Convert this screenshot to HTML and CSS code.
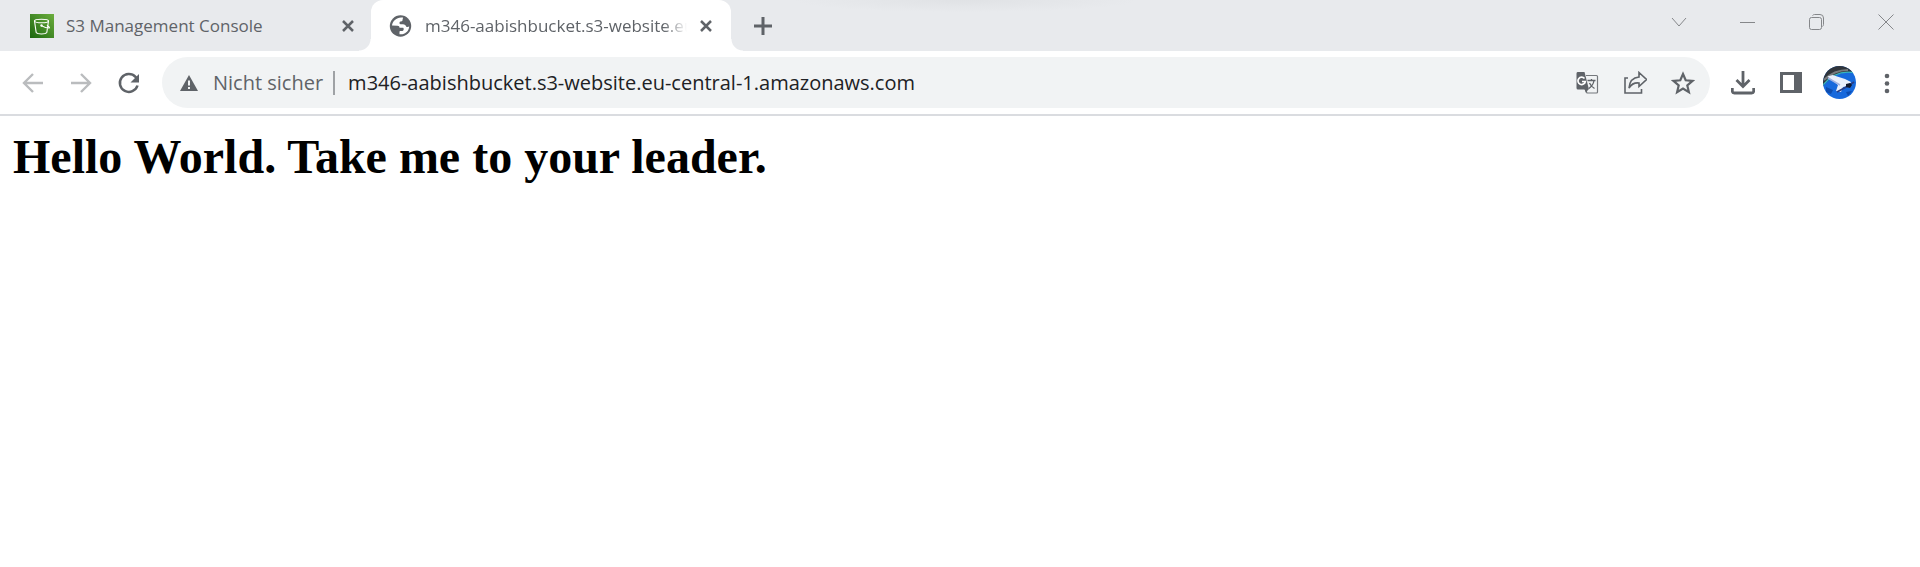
FILE: index.html
```html
<!DOCTYPE html>
<html lang="de">
<head>
<meta charset="utf-8">
<title>m346-aabishbucket.s3-website.eu-central-1.amazonaws.com</title>
<link rel="stylesheet" href="styles.css">
</head>
<body>
<header class="browser">
  <div class="tab-strip">
    <div class="tab">
      <svg class="favicon" viewBox="0 0 24 24" aria-hidden="true">
        <defs><linearGradient id="s3" x1="0" y1="1" x2="1" y2="0"><stop offset="0" stop-color="#1b660f"/><stop offset="1" stop-color="#6cae3e"/></linearGradient></defs>
        <path fill="url(#s3)" d="M0 0h24v24H0z"/>
        <g fill="none" stroke="#fff" stroke-width="1.1" stroke-linecap="round"><ellipse cx="11.500" cy="7" rx="7" ry="1.800"/><path d="M4.500 7l1.700 11.500c1.500 1.900 9.100 1.900 10.600 0L18.500 7M11.500 11.700c3 1.500 6 2.800 8 2.100-.2-1.200-1.200-1.800-2.200-2.300"/></g>
        <circle cx="11.500" cy="11.500" r="1.200" fill="#fff"/>
      </svg>
      <span class="tab-title">S3 Management Console</span>
      <button class="tab-close" aria-label="Tab schließen"><svg class="icon-cross" viewBox="0 0 14 14"><path d="M2 2l10 10M12 2L2 12"/></svg></button>
    </div>
    <div class="tab tab-active">
      <svg class="favicon" viewBox="0 0 24 24" aria-hidden="true"><circle cx="11.500" cy="12" r="10.700" fill="#5f6368"/><path fill="#fff" d="M14 3.600C8.500 2.500 3.500 6.500 3 11.500l5.500.2c1.500 0 2 .8 2 2h3.200c.8 0 1 .6 1 1.300 0 1.500-.7 2-2 2h-1.200c-.7 0-1 .4-1 1v2.200c5 .8 9.500-2.800 9.700-7.700-.8.500-1.700.5-2.700.4-.8-1.700-1.800-2.700-3.500-2.700h-2.500c-.8 0-1-.5-1-1.200C10.500 7.800 11 7.500 12 7.500s1.500-.4 1.500-1.400c0-.8.500-1.300.5-2.500z"/></svg>
      <span class="tab-title">m346-aabishbucket.s3-website.eu-central-1.amazonaws.com</span>
      <button class="tab-close" aria-label="Tab schließen"><svg class="icon-cross" viewBox="0 0 14 14"><path d="M2 2l10 10M12 2L2 12"/></svg></button>
    </div>
    <button class="new-tab" aria-label="Neuer Tab"><svg class="icon-plus" viewBox="0 0 18 18"><path d="M9 0v18M0 9h18"/></svg></button>
    <div class="strip-shade"></div>
    <div class="window-controls">
      <button aria-label="Tabs suchen"><svg class="icon-window" viewBox="0 0 16 16"><path d="M1 4l7 8 7-8"/></svg></button>
      <button aria-label="Minimieren"><svg class="icon-window" viewBox="0 0 16 16"><path d="M0 8.500h15"/></svg></button>
      <button aria-label="Verkleinern"><svg class="icon-window" viewBox="0 0 16 16"><rect x=".5" y="3.500" width="12" height="12" rx="2"/><path d="M3.500 1.500q1-1 2-1H11q3.500 0 3.500 3.500v6.500q0 1-1 2"/></svg></button>
      <button aria-label="Schließen"><svg class="icon-window" viewBox="0 0 16 16"><path d="M.5.500l15 15M15.500.500l-15 15"/></svg></button>
    </div>
  </div>
  <div class="toolbar">
    <nav class="tools">
      <button aria-label="Zurück" disabled><svg class="icon nav-off" viewBox="0 0 24 24"><path d="M22 12H3M12 3l-9 9 9 9"/></svg></button>
      <button aria-label="Vorwärts" disabled><svg class="icon nav-off" viewBox="0 0 24 24"><path d="M2 12h19M12 3l9 9-9 9"/></svg></button>
      <button aria-label="Neu laden"><svg class="icon" viewBox="0 0 24 24"><path d="M20.500 14.500A9 9 0 1 1 18.500 5.800l1.500 1.700" fill="none" stroke="#5f6368" stroke-width="2.500"/><path d="M22 3v8.500h-8.500z" fill="#5f6368"/></svg></button>
    </nav>
    <div class="omnibox">
      <button class="security"><svg class="icon-warning" viewBox="0 0 18 18"><path fill="#5f6368" fill-rule="evenodd" d="M9 1l9 16H0zM8 6.500v5h2v-5zM8 13v2h2v-2z"/></svg><span>Nicht sicher</span></button>
      <input class="address" type="text" aria-label="Adresse" value="m346-aabishbucket.s3-website.eu-central-1.amazonaws.com">
      <div class="tools">
        <button aria-label="Seite übersetzen"><svg class="icon" viewBox="0 0 24 24"><path d="M11 4.500h10.500q1 0 1 1V21q0 1-1 1H12l-2-4" fill="none" stroke="#75787c" stroke-width="1.200"/><path d="M12.500 9.500h8M16.500 8v1.500M19 9.500c-.5 3.500-2.500 6-5 8M14.500 12c1 2.300 3 4.300 5 5.500" fill="none" stroke="#5f6368" stroke-width="1.300"/><path fill="#5f6368" d="M2.500 1H9.500L14 18.500H3q-1.500 0-1.500-1.500V2.500Q1.500 1 2.500 1zM9.500 18h4l-2.500 4z"/><path d="M9.500 7.500a3.700 3.700 0 1 0 .8 3H7" fill="none" stroke="#fff" stroke-width="1.700"/></svg></button>
        <button aria-label="Teilen"><svg class="icon" viewBox="0 0 24 24"><path d="M5 7H2v15h16.500V18M16 1.500l7.500 7-7.500 7V12c-4.500-.5-7.500 1-10 5 .5-6 4-10.500 10-11z" fill="none" stroke="#5f6368" stroke-width="1.600"/></svg></button>
        <button aria-label="Lesezeichen"><svg class="icon" viewBox="0 0 24 24"><path d="M12 3l2.700 6.300 6.800.6-5.200 4.500 1.600 6.700L12 17.500l-5.900 3.600 1.600-6.700-5.200-4.500 6.800-.6z" fill="none" stroke="#5f6368" stroke-width="2.200"/></svg></button>
      </div>
    </div>
    <div class="tools">
      <button aria-label="Downloads"><svg class="icon" viewBox="0 0 24 24"><path d="M12 0v15M5.500 9l6.500 6.500L18.500 9M1.300 17V20q0 2 2 2h17.400q2 0 2-2v-3" fill="none" stroke="#5f6368" stroke-width="2.800"/></svg></button>
      <button aria-label="Seitenleiste"><svg class="icon" viewBox="0 0 24 24"><path fill="#5f6368" fill-rule="evenodd" d="M1 1h22v21H1zM4 4v15h11V4z"/></svg></button>
      <button aria-label="Profil"><svg class="avatar" viewBox="0 0 33 33"><defs><clipPath id="round"><circle cx="16.500" cy="16.500" r="16.500"/></clipPath></defs><g clip-path="url(#round)"><path fill="#1769dc" d="M0 0h33v33H0z"/><path fill="#30353b" d="M0 0h33v6C20 5 9 9 0 20z"/><path d="M0 19C9 8 20 4 33 7" fill="none" stroke="#38b5bd" stroke-width="1.200"/><path d="M1 14C8 7 15 4 25 4" fill="none" stroke="#777b7e" stroke-width="2"/><path fill="#0d4caf" d="M3 21l7 3-2 4-5-2zM23 26l6-1-4 5z"/><path fill="#e9effb" d="M4.500 10.500l5-1.500L22 13l6 3-2 4-6 1-2 5-5-1 2-6z"/><path d="M5 12l12 7" stroke="#9fb2e2" stroke-width="1.500"/><path d="M31 16l-6 4-11 6" fill="none" stroke="#293e86" stroke-width="1.800"/><path fill="#11182e" d="M23 18l4-1 2 2-2 3-4-1z"/></g></svg></button>
      <button aria-label="Menü"><svg class="icon" viewBox="0 0 24 24"><g fill="#5f6368"><circle cx="12" cy="5" r="2.300"/><circle cx="12" cy="12.500" r="2.300"/><circle cx="12" cy="20" r="2.300"/></g></svg></button>
    </div>
  </div>
</header>
<main class="page">
  <h1>Hello World. Take me to your leader.</h1>
</main>
</body>
</html>
```

FILE: styles.css
```css
* { box-sizing: border-box; }

body {
  margin: 0;
  background: #fff;
  font-family: "Open Sans", "Noto Sans", sans-serif;
  color: #5f6368;
}

button {
  display: flex;
  align-items: center;
  justify-content: center;
  padding: 0;
  border: 0;
  background: none;
  color: inherit;
  font: inherit;
}

svg { display: block; flex: none; }

.tab-strip {
  display: flex;
  height: 51px;
  background: #e8eaed;
}

.tab {
  display: flex;
  align-items: center;
  gap: 12px;
  width: 360px;
  padding: 0 10px 0 19px;
  font-size: 17px;
}

.tab:first-child { margin-left: 11px; }

.tab-active {
  position: relative;
  padding: 0 12px 0 18px;
  background: #fff;
  border-radius: 12px 12px 0 0;
}

.tab-active::before,
.tab-active::after {
  content: "";
  position: absolute;
  bottom: 0;
  width: 12px;
  height: 12px;
}

.tab-active::before {
  right: 100%;
  background: radial-gradient(circle at 0 0, #e8eaed 11px, #fff 12px);
}

.tab-active::after {
  left: 100%;
  background: radial-gradient(circle at 100% 0, #e8eaed 11px, #fff 12px);
}

.favicon { width: 24px; height: 24px; }

.tab-title {
  flex: 1;
  min-width: 0;
  overflow: hidden;
  white-space: nowrap;
}

.tab-active .tab-title {
  mask-image: linear-gradient(to left, transparent, #000 24px);
}

.tab-close { width: 26px; height: 26px; margin-left: -6px; }

.icon-cross {
  width: 14px;
  height: 14px;
  stroke: #5f6368;
  stroke-width: 2.5;
}

.new-tab { width: 64px; }

.icon-plus {
  width: 18px;
  height: 18px;
  stroke: #5f6368;
  stroke-width: 3;
}

.strip-shade {
  flex: 0 1 340px;
  height: 12px;
  margin-right: auto;
  background: radial-gradient(ellipse at 50% 0, #e0e2e5, #e8eaed 72%);
}

.window-controls {
  display: flex;
  align-items: center;
  height: 43px;
}

.window-controls button { width: 69px; height: 43px; }

.icon-window {
  width: 16px;
  height: 16px;
  fill: none;
  stroke: #85878a;
}

.toolbar {
  display: flex;
  align-items: center;
  gap: 9px;
  padding: 6px 9px;
  border-bottom: 2px solid #dadce0;
}

.tools { display: flex; }

.tools button { width: 48px; height: 48px; }

.icon { width: 24px; height: 24px; }

.nav-off {
  fill: none;
  stroke: #babcbe;
  stroke-width: 2.4;
}

.avatar { width: 33px; height: 33px; }

.omnibox {
  display: flex;
  flex: 1;
  align-items: center;
  height: 51px;
  padding: 0 3px 0 18px;
  border-radius: 26px;
  background: #f1f3f4;
  font-size: 20px;
}

.security {
  gap: 15px;
  height: 24px;
  padding-right: 10px;
  border-right: 2px solid #9fa2a5;
}

.icon-warning { width: 18px; height: 18px; }

.address {
  flex: 1;
  min-width: 0;
  padding: 0 0 0 13px;
  border: 0;
  outline: 0;
  background: none;
  color: #202124;
  font: inherit;
}

.page {
  padding: 13px;
  color: #000;
  font-family: "Liberation Serif", "Times New Roman", serif;
}

.page h1 {
  margin: 0;
  font-size: 48px;
  line-height: 56px;
}
```
